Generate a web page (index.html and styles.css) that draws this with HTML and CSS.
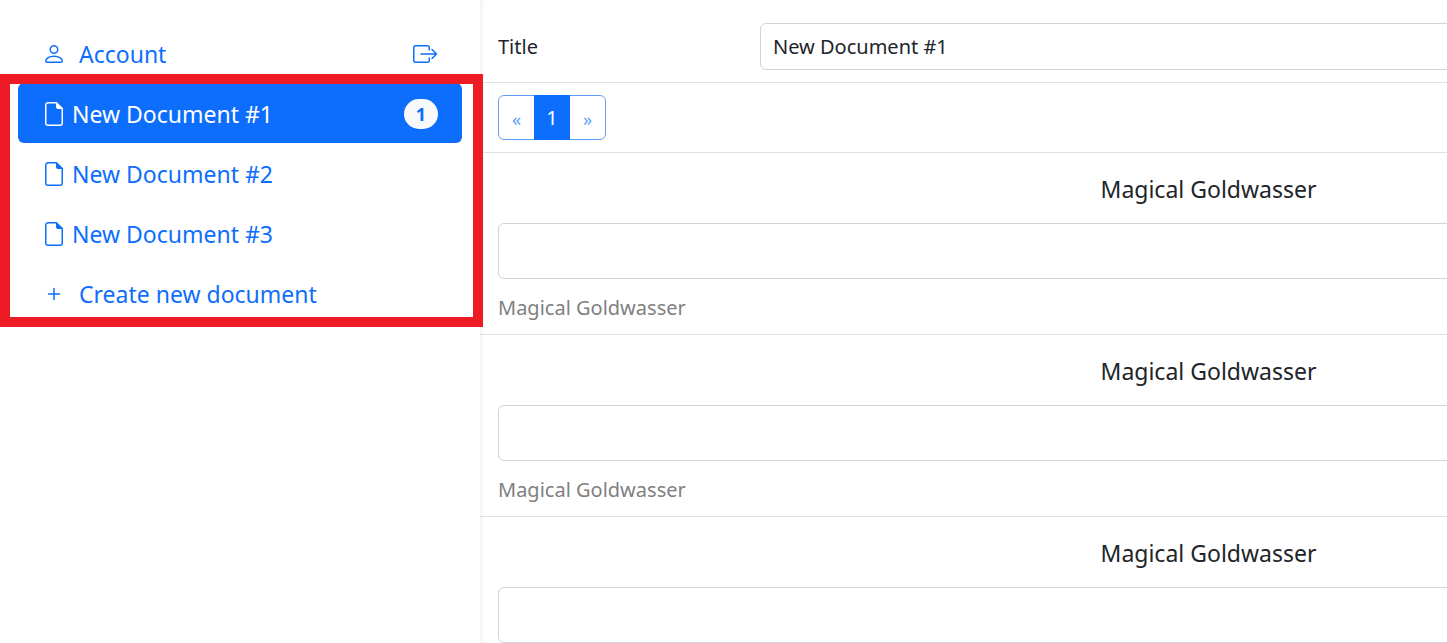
FILE: index.html
```html
<!DOCTYPE html>
<html lang="en">
<head>
<meta charset="utf-8">
<title>Documents</title>
<link rel="stylesheet" href="styles.css">
</head>
<body>
<svg class="sprite" aria-hidden="true">
  <symbol id="file" viewBox="0 0 18 24">
    <path fill="none" stroke="currentColor" stroke-width="1.5" d="M11.5.75H3A2.25 2.25 0 0 0 .75 3v18A2.25 2.25 0 0 0 3 23.25h12A2.25 2.25 0 0 0 17.25 21V6.5"/>
    <path fill="currentColor" d="M11 0h.7L18 6.300V7h-5a2 2 0 0 1-2-2z"/>
  </symbol>
</svg>
<div class="app">
  <nav class="sidebar">
    <div class="item">
      <a class="link" href="#account">
        <svg class="icon" viewBox="0 0 18 18" fill="none" stroke="currentColor" stroke-width="1.5"><circle cx="9" cy="4.5" r="3.75"/><path d="M2 17.25h14c.8 0 1.25-.5 1.25-1.25 0-2-2.5-4.75-8.25-4.750S.75 14 .75 16c0 .75.45 1.25 1.25 1.25z"/></svg>
        <span class="spaced">Account</span>
      </a>
      <a class="logout" href="#logout" aria-label="Log out">
        <svg class="exit" viewBox="0 0 25 18" fill="none" stroke="currentColor" stroke-width="1.5"><path d="M16.25 5.500V2.500A1.750 1.750 0 0 0 14.500.75h-12A1.750 1.750 0 0 0 .75 2.500v13a1.750 1.750 0 0 0 1.750 1.750h12a1.750 1.750 0 0 0 1.750-1.750v-3"/><path stroke-linecap="round" stroke-linejoin="round" d="M8 9h15.500M19 4.500 23.500 9 19 13.500"/></svg>
      </a>
    </div>
    <a class="item link active" href="#1"><svg class="file"><use href="#file"/></svg><span>New Document #1</span><span class="badge">1</span></a>
    <a class="item link" href="#2"><svg class="file"><use href="#file"/></svg><span>New Document #2</span></a>
    <a class="item link" href="#3"><svg class="file"><use href="#file"/></svg><span>New Document #3</span></a>
    <a class="item link" href="#new">
      <svg class="icon" viewBox="0 0 18 18" fill="none" stroke="currentColor" stroke-width="1.5" stroke-linecap="round"><path d="M9 3.500v11M3.500 9h11"/></svg>
      <span class="spaced">Create new document</span>
    </a>
    <div class="highlight"></div>
  </nav>
  <main class="main">
    <div class="title-row">
      <label class="title-label" for="title">Title</label>
      <input class="field title-input" id="title" type="text" value="New Document #1">
    </div>
    <div class="pager-row">
      <div class="pager">
        <button class="page arrow" type="button" aria-label="Previous">«</button>
        <button class="page current" type="button">1</button>
        <button class="page arrow" type="button" aria-label="Next">»</button>
      </div>
    </div>
    <section class="entry">
      <label class="heading" for="e1">Magical Goldwasser</label>
      <input class="field text" id="e1" type="text">
      <p class="caption">Magical Goldwasser</p>
    </section>
    <section class="entry">
      <label class="heading" for="e2">Magical Goldwasser</label>
      <input class="field text" id="e2" type="text">
      <p class="caption">Magical Goldwasser</p>
    </section>
    <section class="entry">
      <label class="heading" for="e3">Magical Goldwasser</label>
      <input class="field text" id="e3" type="text">
    </section>
  </main>
</div>
</body>
</html>
```
FILE: styles.css
```css
* { box-sizing: border-box; }
body {
  margin: 0;
  color: #212529;
  background: #fff;
  font: 20px/30px "Noto Sans", "Open Sans", sans-serif;
}
.sprite { display: none; }
.app { display: flex; height: 100vh; overflow: hidden; }
.sidebar {
  position: relative;
  flex: 0 0 480px;
  padding: 23px 18px;
}
.item {
  display: flex;
  align-items: center;
  height: 60px;
  padding: 2px 24px 0 27px;
  border-radius: 6px;
  font-size: 23px;
}
.link { color: #0d6efd; text-decoration: none; }
.item > .link { display: flex; align-items: center; }
.link.active { color: #fff; background: #0d6efd; }
.icon { width: 18px; height: 18px; }
.file { width: 18px; height: 24px; margin-right: 9px; }
.spaced { margin-left: 16px; }
.logout { display: flex; margin-left: auto; color: #0d6efd; }
.exit { width: 25px; height: 18px; }
.badge {
  margin-left: auto;
  padding: 0 12px;
  border-radius: 15px;
  color: #0d6efd;
  background: #f8f9fa;
  font-size: 18px;
  font-weight: 700;
  line-height: 30px;
}
.highlight {
  position: absolute;
  top: 74px;
  left: 0;
  width: 483px;
  height: 253px;
  border: 10px solid #ed1c24;
  pointer-events: none;
  z-index: 1;
}
.main {
  flex: 1 0 1457px;
  box-shadow: inset 4px 0 4px -2px rgba(0, 0, 0, 0.06);
}
.title-row, .pager-row, .entry { border-bottom: 1px solid #dee2e6; }
.title-row {
  display: flex;
  align-items: center;
  padding: 23px 18px 12px;
}
.title-label { width: 262px; }
.field {
  border: 1px solid #ced4da;
  border-radius: 6px;
  padding: 0 12px;
  color: inherit;
  background: #fff;
  font: inherit;
}
.title-input { flex: 1; height: 47px; }
.pager-row { padding: 12px 18px; }
.pager {
  display: inline-flex;
  height: 45px;
  vertical-align: top;
  border: 1px solid #5e9efe;
  border-radius: 6px;
}
.page {
  width: 35px;
  padding: 0;
  border: 0;
  color: #5e9efe;
  background: none;
  font: inherit;
}
.arrow { padding-top: 2px; font-size: 18px; }
.current {
  width: 36px;
  margin: -1px 0;
  color: #fff;
  background: #0d6efd;
}
.entry { display: flex; flex-direction: column; padding: 18px 18px 11px; }
.heading { align-self: center; margin-bottom: 16px; font-size: 23px; line-height: 36px; }
.text { height: 56px; }
.caption { margin: 14px 0 0; color: #808080; }
```
